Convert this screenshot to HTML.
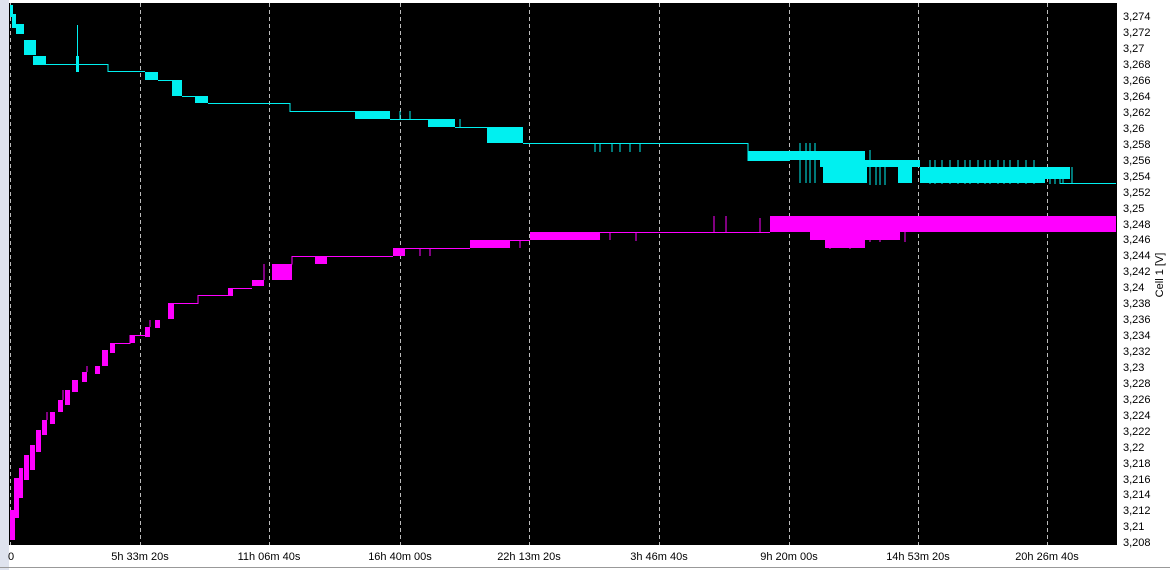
<!DOCTYPE html>
<html><head><meta charset="utf-8"><style>
html,body{margin:0;padding:0;background:#fff;width:1170px;height:570px;overflow:hidden}
svg{display:block}
text{font-family:"Liberation Sans",sans-serif;font-size:11px;fill:#000}
</style></head><body>
<svg width="1170" height="570" viewBox="0 0 1170 570">
<rect x="0" y="0" width="1170" height="570" fill="#fff"/>
<rect x="0" y="0" width="9" height="570" fill="#dfe3ee"/>
<rect x="9" y="3" width="1107" height="542" fill="#000"/>
<line x1="0" y1="567.5" x2="1170" y2="567.5" stroke="#999"/>
<g stroke="#bbb" stroke-dasharray="4,3" stroke-width="1">
<line x1="10.5" y1="3" x2="10.5" y2="545"/>
<line x1="140.5" y1="3" x2="140.5" y2="545"/>
<line x1="269.5" y1="3" x2="269.5" y2="545"/>
<line x1="400.5" y1="3" x2="400.5" y2="545"/>
<line x1="529.5" y1="3" x2="529.5" y2="545"/>
<line x1="659.5" y1="3" x2="659.5" y2="545"/>
<line x1="789.5" y1="3" x2="789.5" y2="545"/>
<line x1="918.5" y1="3" x2="918.5" y2="545"/>
<line x1="1047.5" y1="3" x2="1047.5" y2="545"/>
</g>
<!-- cyan -->
<g fill="#00f0f0" stroke="none">
<rect x="10" y="5" width="3" height="12"/><rect x="12" y="14" width="4" height="14"/>
<rect x="16" y="24" width="8" height="10"/><rect x="24" y="40" width="12" height="15"/>
<rect x="33" y="56" width="13" height="8"/><rect x="76" y="56" width="3" height="16"/>
<rect x="145" y="72" width="13" height="8"/><rect x="172" y="80" width="10" height="16"/>
<rect x="195" y="96" width="13" height="7"/><rect x="355" y="111" width="35" height="8"/>
<rect x="428" y="119" width="27" height="8"/><rect x="487" y="127" width="36" height="16"/>
<rect x="748" y="151" width="42" height="9"/><rect x="790" y="151" width="55" height="9"/>
<rect x="820" y="160" width="100" height="7"/><rect x="823" y="167" width="44" height="16"/>
<rect x="845" y="151" width="20" height="9"/><rect x="898" y="160" width="14" height="23"/>
<rect x="920" y="167" width="125" height="16"/><rect x="1045" y="167" width="25" height="12"/>
</g>
<g stroke="#00f0f0" stroke-width="1" fill="none">
<path d="M33 64.5H108V71.5H145M158 80.5H172M182 96.5H195M208 103.5H290V111.5H355M390 119.5H428M455 127.5H487M523 143.5H748V160.5H790M1045 175.5H1060V183.5H1116"/>
<path d="M77.5 25V72M400 111v9M410 111v9M460 119v9M595 143v9M600 143v9M612 143v9M620 143v9M630 143v9M640 143v9M800 143v40M806 143v40M810 143v40M815 143v40M870 150v35M876 160v25M880 160v25M885 160v25M930 160v24M935 160v24M942 160v24M950 160v24M958 160v24M965 160v24M970 160v24M978 160v24M985 160v24M990 160v24M998 160v24M1004 160v24M1010 160v24M1018 160v24M1026 160v24M1034 160v24M1050 167v17M1055 167v17M1063 167v17M1072 167v17"/>
</g>
<!-- magenta -->
<g fill="#ff00ff">
<rect x="10" y="510" width="5" height="30"/><rect x="14" y="478" width="5" height="40"/>
<rect x="19" y="468" width="4" height="30"/><rect x="24" y="455" width="5" height="25"/>
<rect x="30" y="445" width="5" height="25"/><rect x="36" y="430" width="5" height="22"/>
<rect x="42" y="420" width="5" height="15"/><rect x="50" y="412" width="5" height="12"/>
<rect x="58" y="400" width="5" height="12"/><rect x="65" y="390" width="5" height="15"/>
<rect x="72" y="380" width="6" height="12"/><rect x="82" y="372" width="5" height="10"/>
<rect x="95" y="366" width="5" height="8"/><rect x="102" y="350" width="6" height="16"/>
<rect x="110" y="343" width="5" height="10"/><rect x="130" y="335" width="5" height="8"/>
<rect x="145" y="327" width="5" height="10"/><rect x="155" y="320" width="5" height="8"/>
<rect x="168" y="303" width="6" height="16"/><rect x="228" y="288" width="5" height="8"/>
<rect x="252" y="280" width="12" height="6"/><rect x="272" y="264" width="20" height="16"/>
<rect x="315" y="256" width="12" height="8"/><rect x="393" y="248" width="12" height="8"/>
<rect x="470" y="240" width="40" height="8"/><rect x="530" y="232" width="70" height="8"/>
<rect x="770" y="216" width="346" height="16"/><rect x="810" y="232" width="90" height="8"/>
<rect x="825" y="240" width="40" height="8"/>
</g>
<g stroke="#ff00ff" stroke-width="1" fill="none">
<path d="M47 420V412M63 400V390M87 372V366M115 343.5H130V335.5H145M150 327V320M174 303.5H198V295.5H228M233 288.5H252M264 280V264M292 264.5V256.5H315M327 256.5H393M405 248.5H470M510 240.5H530M600 232.5H770"/>
<path d="M420 248v8M430 248v8M520 240v8M540 232v8M610 232v8M636 232v9M714 216v16M726 216v16M760 218v14M830 232v17M850 232v17M870 232v10M880 232v10M905 232v10M960 216v16"/>
</g>
<!-- right axis -->
<line x1="1116.5" y1="3" x2="1116.5" y2="545" stroke="#000"/>
<g id="yl">
<text x="1123" y="20">3,274</text><text x="1123" y="36">3,272</text><text x="1123" y="52">3,27</text>
<text x="1123" y="68">3,268</text><text x="1123" y="84">3,266</text><text x="1123" y="100">3,264</text>
<text x="1123" y="116">3,262</text><text x="1123" y="132">3,26</text><text x="1123" y="148">3,258</text>
<text x="1123" y="164">3,256</text><text x="1123" y="180">3,254</text><text x="1123" y="196">3,252</text>
<text x="1123" y="212">3,25</text><text x="1123" y="228">3,248</text><text x="1123" y="243">3,246</text>
<text x="1123" y="259">3,244</text><text x="1123" y="275">3,242</text><text x="1123" y="291">3,24</text>
<text x="1123" y="307">3,238</text><text x="1123" y="323">3,236</text><text x="1123" y="339">3,234</text>
<text x="1123" y="355">3,232</text><text x="1123" y="371">3,23</text><text x="1123" y="387">3,228</text>
<text x="1123" y="403">3,226</text><text x="1123" y="419">3,224</text><text x="1123" y="435">3,222</text>
<text x="1123" y="451">3,22</text><text x="1123" y="467">3,218</text><text x="1123" y="483">3,216</text>
<text x="1123" y="498">3,214</text><text x="1123" y="514">3,212</text><text x="1123" y="530">3,21</text>
<text x="1123" y="546">3,208</text>
</g>
<text transform="translate(1163,275) rotate(-90)" text-anchor="middle" font-size="10">Cell 1 [V]</text>
<!-- x axis -->
<text x="8" y="560">0</text>
<text x="140" y="560" text-anchor="middle">5h 33m 20s</text>
<text x="269" y="560" text-anchor="middle">11h 06m 40s</text>
<text x="400" y="560" text-anchor="middle">16h 40m 00s</text>
<text x="529" y="560" text-anchor="middle">22h 13m 20s</text>
<text x="659" y="560" text-anchor="middle">3h 46m 40s</text>
<text x="789" y="560" text-anchor="middle">9h 20m 00s</text>
<text x="918" y="560" text-anchor="middle">14h 53m 20s</text>
<text x="1047" y="560" text-anchor="middle">20h 26m 40s</text>
</svg>
</body></html>
